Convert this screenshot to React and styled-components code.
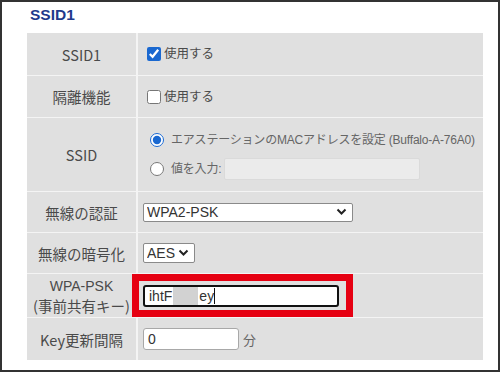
import React from 'react';
import styled, { createGlobalStyle } from 'styled-components';

const GlobalStyle = createGlobalStyle`
  html, body {
    margin: 0;
    padding: 0;
    background: #fff;
  }
  body {
    font-family: "Liberation Sans", "Noto Sans CJK JP", sans-serif;
  }
`;

const Frame = styled.div`
  width: 500px;
  height: 372px;
  box-sizing: border-box;
  border: 2px solid #333;
  padding: 4px 15px 0 25px;
  background: #fff;
`;

const Title = styled.h2`
  margin: 0 0 9px;
  padding-left: 3px;
  font-family: "Liberation Sans", "Noto Sans", sans-serif;
  font-size: 15.5px;
  font-weight: bold;
  line-height: 18px;
  color: #1f3a8c;
`;

const Table = styled.div`
  display: grid;
  grid-template-columns: 109px 1fr;
  column-gap: 2px;
  row-gap: 1px;
  background: #f4f4f4;
`;

const Label = styled.div`
  height: ${p => p.$h}px;
  background: #e0e0e0;
  display: flex;
  flex-direction: column;
  align-items: center;
  justify-content: center;
  text-align: center;
  font-family: "Noto Sans CJK JP", sans-serif;
  font-size: 14.5px;
  color: #4a4a4a;
  white-space: nowrap;
`;

const LabelLine = styled.span`
  display: block;
  line-height: 19px;
  font-family: ${p => (p.$latin ? '"Liberation Sans", sans-serif' : '"Noto Sans CJK JP", sans-serif')};
  font-size: ${p => (p.$latin ? '14px' : '14.5px')};
`;

const Value = styled.div`
  position: relative;
  height: ${p => p.$h}px;
  background: #e0e0e0;
  display: flex;
  flex-direction: ${p => (p.$stack ? 'column' : 'row')};
  justify-content: ${p => (p.$stack ? 'center' : 'flex-start')};
  align-items: ${p => (p.$stack ? 'flex-start' : 'center')};
  gap: ${p => (p.$stack ? '7px' : '0')};
  padding-left: 5px;
  font-size: 12.5px;
  color: #4a4a4a;
  white-space: nowrap;
`;

const Option = styled.label`
  display: flex;
  align-items: center;
  gap: 3px;
  line-height: 22px;
`;

const Check = styled.input.attrs({ type: 'checkbox' })`
  margin: 0 0 0 4px;
  width: 14px;
  height: 14px;
  accent-color: #1a68d0;
`;

const Radio = styled.input.attrs({ type: 'radio' })`
  margin: 0 4px 0 7px;
  width: 14px;
  height: 14px;
  accent-color: #1a68d0;
`;

const Muted = styled.span`
  color: #666;
  font-size: 12px;
  letter-spacing: -0.2px;
`;

const FlatInput = styled.div`
  width: 196px;
  height: 22px;
  box-sizing: border-box;
  background: #ebebeb;
  border: 1px solid #dadada;
  border-radius: 2px;
`;

const SelectBox = styled.div`
  position: relative;
  width: ${p => p.$w}px;
  height: ${p => p.$hh}px;
`;

const Select = styled.select`
  appearance: none;
  width: 100%;
  height: 100%;
  box-sizing: border-box;
  margin: 0;
  padding: 0 0 0 3px;
  border: 1px solid #8a8a8a;
  border-radius: 2px;
  background: #fff;
  font-family: "Liberation Sans", "Noto Sans", sans-serif;
  font-size: 14px;
  color: #333;
`;

const Chevron = styled.svg`
  position: absolute;
  right: 6px;
  top: 50%;
  transform: translateY(-50%);
  pointer-events: none;
`;

const TextBox = styled.div`
  display: flex;
  align-items: center;
  width: ${p => p.$w}px;
  height: ${p => p.$hh}px;
  box-sizing: border-box;
  padding-left: 4px;
  background: #fff;
  border: ${p => (p.$focus ? '2px solid #111' : '1px solid #a8a8a8')};
  border-radius: 3px;
  font-family: "Liberation Sans", "Noto Sans", sans-serif;
  font-size: 14px;
  color: #333;
`;

const Mask = styled.span`
  display: inline-block;
  width: 25px;
  height: 18px;
  margin: 0 1px;
  background: #d2d2d2;
`;

const Caret = styled.span`
  display: inline-block;
  width: 1px;
  height: 16px;
  background: #111;
`;

const Unit = styled.span`
  margin-left: 4px;
  font-size: 13px;
  color: #666;
`;

const Highlight = styled.div`
  position: absolute;
  left: -6px;
  top: 0;
  width: 221px;
  height: 43px;
  box-sizing: border-box;
  border: 7px solid #e60012;
  pointer-events: none;
`;

const ChevronIcon = () => (
  <Chevron width="11" height="8" viewBox="0 0 11 8">
    <path d="M1.5 1.5 L5.5 5.5 L9.5 1.5" fill="none" stroke="#222" strokeWidth="2" />
  </Chevron>
);

export default function App() {
  return (
    <>
      <GlobalStyle />
      <Frame>
        <Title>SSID1</Title>
        <Table>
          <Label $h={42}>SSID1</Label>
          <Value $h={42}>
            <Option>
              <Check defaultChecked />
              使用する
            </Option>
          </Value>

          <Label $h={41}>隔離機能</Label>
          <Value $h={41}>
            <Option>
              <Check />
              使用する
            </Option>
          </Value>

          <Label $h={73}>SSID</Label>
          <Value $h={73} $stack>
            <Option>
              <Radio name="ssid" defaultChecked />
              <Muted>エアステーションのMACアドレスを設定 (Buffalo-A-76A0)</Muted>
            </Option>
            <Option>
              <Radio name="ssid" />
              <Muted>値を入力:</Muted>
              <FlatInput />
            </Option>
          </Value>

          <Label $h={40}>無線の認証</Label>
          <Value $h={40}>
            <SelectBox $w={210} $hh={19}>
              <Select defaultValue="WPA2-PSK">
                <option>WPA2-PSK</option>
              </Select>
              <ChevronIcon />
            </SelectBox>
          </Value>

          <Label $h={40}>無線の暗号化</Label>
          <Value $h={40}>
            <SelectBox $w={52} $hh={20}>
              <Select defaultValue="AES">
                <option>AES</option>
              </Select>
              <ChevronIcon />
            </SelectBox>
          </Value>

          <Label $h={43}>
            <LabelLine $latin>WPA-PSK</LabelLine>
            <LabelLine>(事前共有キー)</LabelLine>
          </Label>
          <Value $h={43}>
            <TextBox $w={196} $hh={22} $focus>
              ihtF<Mask />ey<Caret />
            </TextBox>
            <Highlight />
          </Value>

          <Label $h={42}>Key更新間隔</Label>
          <Value $h={42}>
            <TextBox $w={96} $hh={22}>0</TextBox>
            <Unit>分</Unit>
          </Value>
        </Table>
      </Frame>
    </>
  );
}
